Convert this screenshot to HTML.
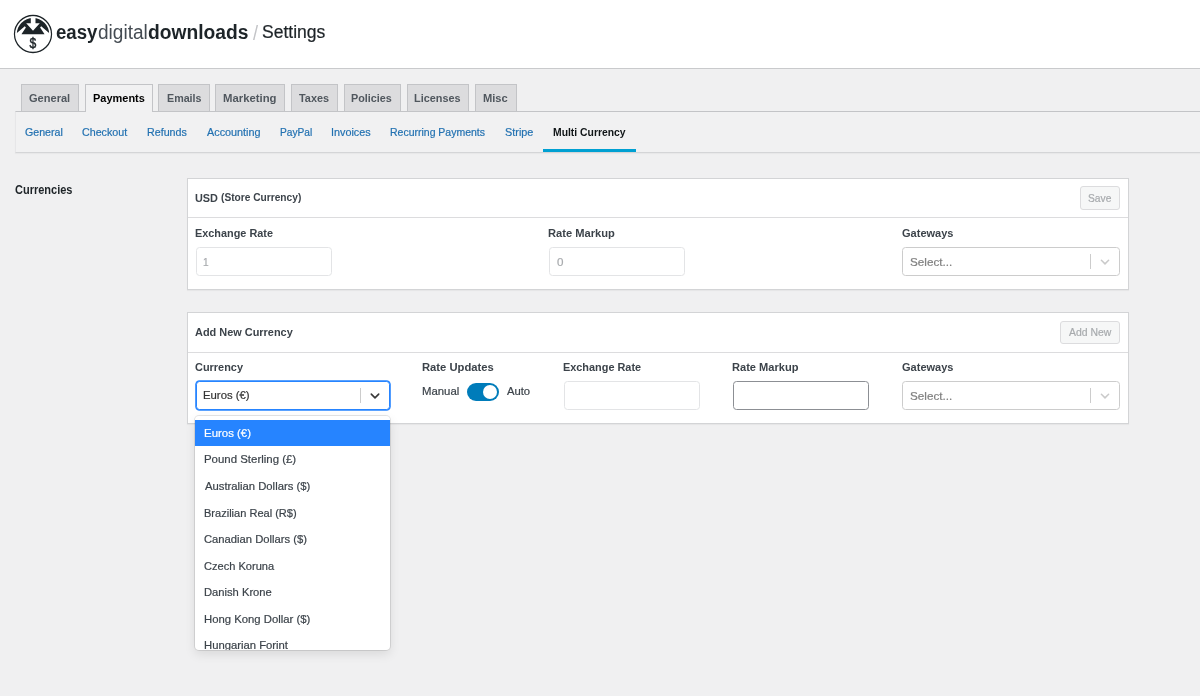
<!DOCTYPE html>
<html lang="en">
<head>
<meta charset="utf-8">
<title>Settings - Easy Digital Downloads</title>
<style>
html,body{margin:0;padding:0;}
body{width:1200px;height:696px;overflow:hidden;background:#f0f0f1;font-family:"Liberation Sans", sans-serif;position:relative;}
.abs,.t,.tab,.box,.inp,.sel,.btn{position:absolute;box-sizing:border-box;}
.r{-webkit-text-stroke:.2px currentColor;}
.t{display:block;white-space:nowrap;line-height:16px;height:16px;transform-origin:0 50%;text-decoration:none;margin:0;padding:0;}
#hdr{left:0;top:0;width:1200px;height:69px;background:#fff;border-bottom:1px solid #c9cacc;}
.tab{top:84px;height:27px;background:#dcdcde;border:1px solid #c3c4c7;border-bottom:none;}
.tab.act{background:#f1f1f2;height:28px;}
#subnav{left:15px;top:111px;width:1185px;height:42px;background:#f1f1f2;border-top:1px solid #c3c4c7;border-bottom:1px solid #d4d5d7;border-left:1px solid #e6e6e8;box-shadow:0 1px 1px rgba(0,0,0,.03);}
#uline{left:543px;top:149px;width:93px;height:3px;background:#00a0d2;}
.box{background:#fff;border:1px solid #d3d4d6;box-shadow:0 1px 1px rgba(0,0,0,.04);}
.hr{position:absolute;height:1px;background:#dcdcde;}
.inp{height:29px;background:#fff;border:1px solid #e3e4e6;border-radius:3.5px;}
.inp.en{border-color:#8c8f94;}
.sel{height:29px;background:#fff;border:1px solid #ccc;border-radius:3.5px;}
.sel.focus{border-color:#2684ff;box-shadow:0 0 0 .8px #2684ff;}
.sep{position:absolute;width:1px;background:#ccc;}
.btn{background:#f6f7f7;border:1px solid #dcdcde;border-radius:3px;}
#menu{left:195px;top:416px;width:195px;height:234px;background:#fff;border-radius:4px;box-shadow:0 0 0 1px rgba(0,0,0,.1),0 4px 11px rgba(0,0,0,.1);overflow:hidden;}
#menu .hl{position:absolute;left:0;top:3.6px;width:195px;height:26.7px;background:#2684ff;}
#toggle{left:467px;top:383px;width:32px;height:18px;border-radius:9px;background:#007cba;}
#toggle i{position:absolute;left:16px;top:2px;width:14px;height:14px;border-radius:7px;background:#fff;display:block;}
svg{position:absolute;display:block;}
#app{position:absolute;left:0;top:0;width:1200px;height:696px;will-change:transform;}
</style>
</head>
<body>
<div id="app">
<div id="hdr" class="abs">
<svg id="logo" width="44" height="44" viewBox="11 11.8 44 44" style="left:11px;top:11.8px">
<defs><clipPath id="lc"><circle cx="33" cy="33.8" r="17.5"/></clipPath></defs>
<circle cx="33" cy="33.8" r="18.5" fill="#fff" stroke="#1d2428" stroke-width="1.3"/>
<g clip-path="url(#lc)">
<path d="M16.8 34 A16.2 16.2 0 0 1 49.2 34 Z" fill="#1d2428"/>
<polygon points="13,33.1 16.6,33.1 24.8,26.1 25.9,27.3 21.6,33.9 21.6,36 13,36" fill="#fff"/>
<polygon points="53,33.1 49.4,33.1 41.2,26.1 40.1,27.3 44.4,33.9 44.4,36 53,36" fill="#fff"/>
<polygon points="30.8,15 35.5,15 35.5,23.1 39.8,23.1 33,30.6 26.2,23.1 30.8,23.1" fill="#fff"/>
</g>
<text x="33" y="47.55" text-anchor="middle" font-family='"Liberation Sans", sans-serif' font-size="14" font-weight="400" fill="#1d2428" stroke="#1d2428" stroke-width="0.45" transform="translate(33 0) scale(0.87 1) translate(-33 0)">$</text>
</svg>
<h1 style="margin:0;font-size:inherit;font-weight:inherit">
<span class="t" style="left:56.02px;top:23.60px;font-size:20px;font-weight:700;color:#1d2428;transform:scaleX(0.9319);">easy</span><span class="t r" style="left:98.10px;top:23.60px;font-size:20px;font-weight:400;color:#444b52;transform:scaleX(0.9520);-webkit-text-stroke:0;">digital</span><span class="t" style="left:147.60px;top:23.60px;font-size:20px;font-weight:700;color:#1d2428;transform:scaleX(0.9621);">downloads</span>
<span class="t r" style="left:252.90px;top:25.10px;font-size:21px;font-weight:400;color:#c3c4c7;transform:scaleX(0.8635);-webkit-text-stroke:0;">/</span>
<span class="t r" style="left:261.75px;top:24.20px;font-size:17.5px;font-weight:400;color:#1d2327;transform:scaleX(1.0026);">Settings</span>
</h1>
</div>
<div id="subnav" class="abs"></div>
<nav>
<div class="tab" style="left:21px;width:58px"></div>
<div class="tab act" style="left:84.5px;width:68.0px"></div>
<div class="tab" style="left:158px;width:51.5px"></div>
<div class="tab" style="left:215px;width:69.5px"></div>
<div class="tab" style="left:291px;width:46.5px"></div>
<div class="tab" style="left:343.5px;width:57.5px"></div>
<div class="tab" style="left:407px;width:61.5px"></div>
<div class="tab" style="left:475px;width:41.5px"></div>

<a class="t" style="left:29.47px;top:89.90px;font-size:11.5px;font-weight:700;color:#50575e;transform:scaleX(0.9619);">General</a>
<a class="t" style="left:92.58px;top:89.90px;font-size:11.5px;font-weight:700;color:#000;transform:scaleX(0.9541);">Payments</a>
<a class="t" style="left:166.90px;top:89.90px;font-size:11.5px;font-weight:700;color:#50575e;transform:scaleX(0.9308);">Emails</a>
<a class="t" style="left:223.46px;top:89.90px;font-size:11.5px;font-weight:700;color:#50575e;transform:scaleX(0.9841);">Marketing</a>
<a class="t" style="left:299.21px;top:89.90px;font-size:11.5px;font-weight:700;color:#50575e;transform:scaleX(0.9453);">Taxes</a>
<a class="t" style="left:351.30px;top:89.90px;font-size:11.5px;font-weight:700;color:#50575e;transform:scaleX(0.9392);">Policies</a>
<a class="t" style="left:414.29px;top:89.90px;font-size:11.5px;font-weight:700;color:#50575e;transform:scaleX(0.9453);">Licenses</a>
<a class="t" style="left:483.08px;top:89.90px;font-size:11.5px;font-weight:700;color:#50575e;transform:scaleX(0.9665);">Misc</a>
</nav>
<div id="uline" class="abs"></div>
<a class="t r" style="left:25.17px;top:123.90px;font-size:11px;font-weight:400;color:#2271b1;transform:scaleX(0.9660);">General</a>
<a class="t r" style="left:82.07px;top:123.90px;font-size:11px;font-weight:400;color:#2271b1;transform:scaleX(0.9724);">Checkout</a>
<a class="t r" style="left:146.73px;top:123.90px;font-size:11px;font-weight:400;color:#2271b1;transform:scaleX(0.9718);">Refunds</a>
<a class="t r" style="left:206.80px;top:123.90px;font-size:11px;font-weight:400;color:#2271b1;transform:scaleX(0.9840);">Accounting</a>
<a class="t r" style="left:279.67px;top:123.90px;font-size:11px;font-weight:400;color:#2271b1;transform:scaleX(0.9261);">PayPal</a>
<a class="t r" style="left:330.72px;top:123.90px;font-size:11px;font-weight:400;color:#2271b1;transform:scaleX(0.9820);">Invoices</a>
<a class="t r" style="left:389.64px;top:123.90px;font-size:11px;font-weight:400;color:#2271b1;transform:scaleX(0.9533);">Recurring Payments</a>
<a class="t r" style="left:504.76px;top:123.90px;font-size:11px;font-weight:400;color:#2271b1;transform:scaleX(0.9886);">Stripe</a>
<a class="t" style="left:552.94px;top:123.90px;font-size:11px;font-weight:700;color:#101517;transform:scaleX(0.9424);">Multi Currency</a>
<label class="t" style="left:15.29px;top:181.50px;font-size:12px;font-weight:700;color:#1d2327;transform:scaleX(0.9163);">Currencies</label>
<div class="box" style="left:187px;top:178px;width:941.5px;height:112px"></div>
<div class="hr" style="left:188px;top:217px;width:940px"></div>
<strong class="t" style="left:194.96px;top:189.90px;font-size:11px;font-weight:700;color:#3c434a;transform:scaleX(0.9896);">USD</strong><strong class="t" style="left:220.79px;top:190.40px;font-size:10px;font-weight:700;color:#3c434a;transform:scaleX(1.0176);">(Store Currency)</strong>
<div class="btn" style="left:1080px;top:186px;width:40px;height:24px"></div><span class="t r" style="left:1088.33px;top:190.00px;font-size:11px;font-weight:400;color:#a7aaad;transform:scaleX(0.9315);">Save</span>
<label class="t" style="left:194.91px;top:224.90px;font-size:11px;font-weight:700;color:#3c434a;transform:scaleX(0.9885);">Exchange Rate</label><label class="t" style="left:548.29px;top:224.90px;font-size:11px;font-weight:700;color:#3c434a;transform:scaleX(1.0131);">Rate Markup</label><label class="t" style="left:901.95px;top:224.90px;font-size:11px;font-weight:700;color:#3c434a;transform:scaleX(1.0021);">Gateways</label>
<div class="inp" style="left:196px;top:247px;width:136px"></div><span class="t r" style="left:202.87px;top:253.70px;font-size:11px;font-weight:400;color:#a7aaad;transform:scaleX(0.9167);">1</span>
<div class="inp" style="left:549px;top:247px;width:136px"></div><span class="t r" style="left:556.78px;top:253.70px;font-size:11px;font-weight:400;color:#a7aaad;transform:scaleX(1.0566);">0</span>
<div class="sel" style="left:902px;top:247px;width:218px"></div><span class="t r" style="left:910.12px;top:253.60px;font-size:11px;font-weight:400;color:#808080;transform:scaleX(1.0643);">Select...</span>
<div class="sep" style="left:1090px;top:254px;height:15px"></div>
<svg width="14" height="10" viewBox="0 0 14 10" style="left:1098.3px;top:257px"><polyline points="3.4,3.3 7,6.9 10.6,3.3" fill="none" stroke="#cacaca" stroke-width="1.5" stroke-linecap="round" stroke-linejoin="round"/></svg>

<div class="box" style="left:187px;top:312px;width:941.5px;height:112px"></div>
<div class="hr" style="left:188px;top:351.5px;width:940px"></div>
<strong class="t" style="left:195.35px;top:324.10px;font-size:11px;font-weight:700;color:#3c434a;transform:scaleX(0.9935);">Add New Currency</strong>
<div class="btn" style="left:1060px;top:321px;width:60px;height:23px"></div><span class="t r" style="left:1069.00px;top:324.30px;font-size:11px;font-weight:400;color:#a7aaad;transform:scaleX(0.9465);">Add New</span>
<label class="t" style="left:195.15px;top:359.10px;font-size:11px;font-weight:700;color:#3c434a;transform:scaleX(0.9931);">Currency</label><label class="t" style="left:421.99px;top:359.10px;font-size:11px;font-weight:700;color:#3c434a;transform:scaleX(1.0205);">Rate Updates</label><label class="t" style="left:562.61px;top:359.10px;font-size:11px;font-weight:700;color:#3c434a;transform:scaleX(0.9898);">Exchange Rate</label><label class="t" style="left:732.29px;top:359.10px;font-size:11px;font-weight:700;color:#3c434a;transform:scaleX(1.0078);">Rate Markup</label><label class="t" style="left:901.95px;top:359.10px;font-size:11px;font-weight:700;color:#3c434a;transform:scaleX(1.0021);">Gateways</label>
<div class="sel focus" style="left:196px;top:381px;width:194px;height:29px"></div><span class="t r" style="left:203.27px;top:387.30px;font-size:11px;font-weight:400;color:#333;transform:scaleX(1.0304);">Euros (€)</span>
<div class="sep" style="left:360px;top:388px;height:15px"></div>
<svg width="14" height="10" viewBox="0 0 14 10" style="left:368.25px;top:391px"><polyline points="3.3,3.1 7,6.9 10.7,3.1" fill="none" stroke="#3a3a3a" stroke-width="1.6" stroke-linecap="round" stroke-linejoin="round"/></svg>
<span class="t r" style="left:421.77px;top:383.00px;font-size:11px;font-weight:400;color:#3c434a;transform:scaleX(1.0324);">Manual</span>
<div id="toggle" class="abs"><i></i></div>
<span class="t r" style="left:507.30px;top:383.00px;font-size:11px;font-weight:400;color:#3c434a;transform:scaleX(1.0220);">Auto</span>
<div class="inp" style="left:564px;top:381px;width:135.5px;height:29px"></div>
<div class="inp en" style="left:733px;top:381px;width:136px;height:29px"></div>
<div class="sel" style="left:902px;top:381px;width:218px;height:29px"></div><span class="t r" style="left:910.12px;top:387.60px;font-size:11px;font-weight:400;color:#808080;transform:scaleX(1.0643);">Select...</span>
<div class="sep" style="left:1090px;top:388px;height:15px"></div>
<svg width="14" height="10" viewBox="0 0 14 10" style="left:1098.3px;top:391px"><polyline points="3.4,3.3 7,6.9 10.6,3.3" fill="none" stroke="#cacaca" stroke-width="1.5" stroke-linecap="round" stroke-linejoin="round"/></svg>

<div id="menu" class="abs">
<div class="hl"></div>
<div class="t r" style="left:8.86px;top:8.80px;font-size:11px;font-weight:400;color:#fff;transform:scaleX(1.0396);">Euros (€)</div>
<div class="t r" style="left:8.86px;top:35.37px;font-size:11px;font-weight:400;color:#3c434a;transform:scaleX(1.0391);">Pound Sterling (£)</div>
<div class="t r" style="left:9.80px;top:61.94px;font-size:11px;font-weight:400;color:#3c434a;transform:scaleX(1.0241);">Australian Dollars ($)</div>
<div class="t r" style="left:8.90px;top:88.51px;font-size:11px;font-weight:400;color:#3c434a;transform:scaleX(1.0039);">Brazilian Real (R$)</div>
<div class="t r" style="left:9.24px;top:115.08px;font-size:11px;font-weight:400;color:#3c434a;transform:scaleX(1.0204);">Canadian Dollars ($)</div>
<div class="t r" style="left:9.25px;top:141.65px;font-size:11px;font-weight:400;color:#3c434a;transform:scaleX(1.0059);">Czech Koruna</div>
<div class="t r" style="left:8.88px;top:168.22px;font-size:11px;font-weight:400;color:#3c434a;transform:scaleX(1.0171);">Danish Krone</div>
<div class="t r" style="left:8.87px;top:194.79px;font-size:11px;font-weight:400;color:#3c434a;transform:scaleX(1.0288);">Hong Kong Dollar ($)</div>
<div class="t r" style="left:8.88px;top:221.36px;font-size:11px;font-weight:400;color:#3c434a;transform:scaleX(1.0250);">Hungarian Forint</div>
</div>
</div>
</body>
</html>
